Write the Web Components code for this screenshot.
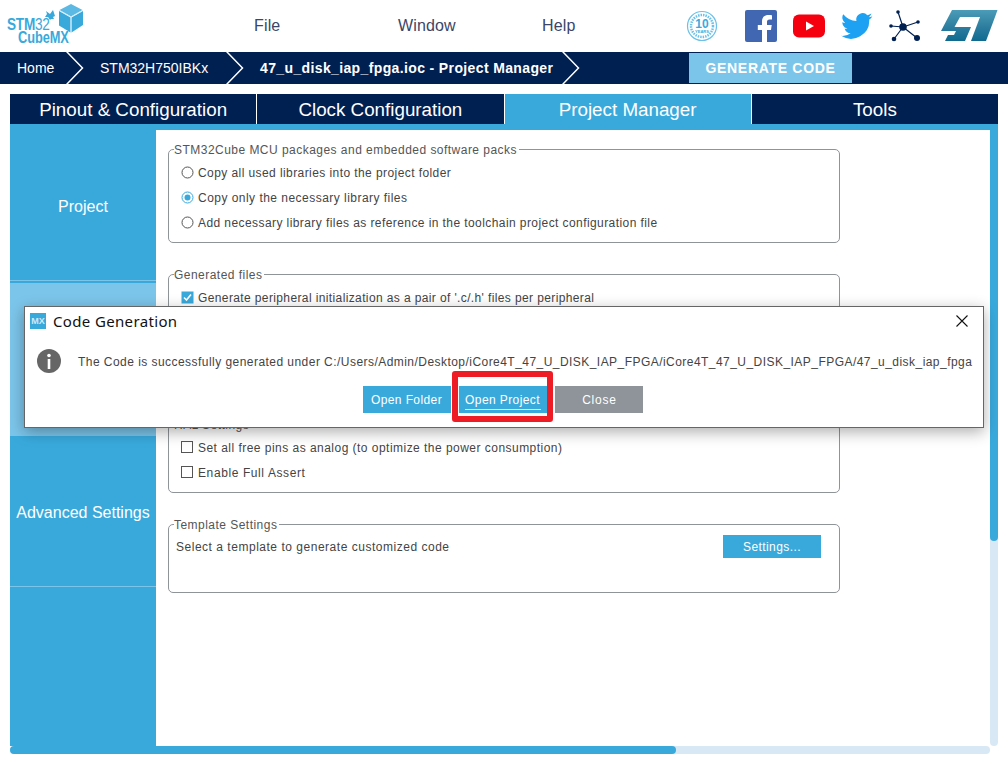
<!DOCTYPE html>
<html>
<head>
<meta charset="utf-8">
<title>STM32CubeMX</title>
<style>
    html, body { margin: 0; height: 100%; background: #fff; overflow: hidden; }
    body { font-family: "Liberation Sans", Arial, sans-serif; position: relative; }
</style>
</head>
<body>
<app-header></app-header>
<app-crumbs></app-crumbs>
<app-tabs></app-tabs>
<app-workspace>
    <side-nav slot="side"></side-nav>
    <group-box label="STM32Cube MCU packages and embedded software packs" h="94">
        <check-row kind="radio">Copy all used libraries into the project folder</check-row>
        <check-row kind="radio" checked style="letter-spacing:.47px">Copy only the necessary library files</check-row>
        <check-row kind="radio">Add necessary library files as reference in the toolchain project configuration file</check-row>
    </group-box>
    <group-box label="Generated files" h="119">
        <check-row kind="box" checked style="letter-spacing:.38px">Generate peripheral initialization as a pair of '.c/.h' files per peripheral</check-row>
    </group-box>
    <group-box label="HAL Settings" h="69">
        <check-row kind="box" style="letter-spacing:.47px">Set all free pins as analog (to optimize the power consumption)</check-row>
        <check-row kind="box" style="letter-spacing:.6px">Enable Full Assert</check-row>
    </group-box>
    <group-box label="Template Settings" h="69">
        <template-row></template-row>
    </group-box>
</app-workspace>
<code-dialog></code-dialog>

<script>
// small helper, every element just stamps its html into an open shadow root
class Base extends HTMLElement {
    constructor() {
        super();
        this.shadow = this.attachShadow({mode: 'open'});
    }
    connectedCallback() {
        this.shadow.innerHTML = this.render();
    }
}

class AppHeader extends Base {
    render() {
        return `
        <style>
            :host { display: flex; height: 52px; align-items: stretch; background: #fff; }
            .logo { width: 254px; position: relative; flex: none; }
            .logo svg { display: block; }
            .menu { display: flex; width: 432px; align-items: center; flex: none; color: #3a4668; font-size: 16px; box-sizing: border-box; }
            .menu span { width: 144px; letter-spacing: .15px; }
            .icons { display: flex; align-items: center; flex: none; }
            .icons svg { display: block; flex: none; }
            .stm { position: absolute; left: 7px; top: 18px; font: bold 17px/13px "Liberation Sans", Arial, sans-serif; color: #39a9dc; transform: scaleX(.8); transform-origin: 0 0; letter-spacing: -.3px; }
            .stm i { font-style: normal; font-weight: normal; }
            .cube { position: absolute; left: 18px; top: 32px; font: bold 16px/12px "Liberation Sans", Arial, sans-serif; color: #39a9dc; transform: scaleX(.8); transform-origin: 0 0; letter-spacing: -.1px; }
        </style>
        <div class="logo">
            <span class="stm">STM<i>32</i></span>
            <span class="cube">CubeMX</span>
            <svg width="90" height="50" viewBox="0 0 90 50">
                <path d="M46 11l4 3 3-4 2 6-2 1 1 2-3 0-1 1-2-3-3 0 2-3z" fill="#39a9dc"/>
                <path d="M71 4l11.500 6-11.500 6.500-11.500-6.500z" fill="#5bb9e4"/>
                <path d="M59 11l11.500 6.500v15l-11.500-7z" fill="#39a9dc"/>
                <path d="M71.500 17.500l11.500-6.500v14l-11.500 7.500z" fill="#39a9dc"/>
                <path d="M71 16.800v15.500M71 16.800L59.500 10.500M71 16.800L82.500 10.500" stroke="#bfe4f6" stroke-width=".7" fill="none"/>
            </svg>
        </div>
        <div class="menu"><span>File</span><span>Window</span><span>Help</span></div>
        <div class="icons">
            <svg width="32" height="32" viewBox="0 0 32 32" style="margin-right:27px">
                <circle cx="16" cy="16" r="14.500" fill="none" stroke="#6cc1e8" stroke-width="1.200"/>
                <circle cx="16" cy="16" r="11" fill="none" stroke="#6cc1e8" stroke-width="2.500" stroke-dasharray="1.500 1"/>
                <text x="16" y="18" text-anchor="middle" font-family="Liberation Sans" font-weight="bold" font-size="12" fill="#39a9dc">10</text>
                <text x="16" y="23" text-anchor="middle" font-family="Liberation Sans" font-weight="bold" font-size="4" fill="#39a9dc">YEARS</text>
            </svg>
            <svg width="32" height="32" viewBox="0 0 32 32" style="margin-right:16px">
                <rect width="32" height="32" rx="2" fill="#4267b2"/>
                <path d="M22 32V20h4l.7-5H22v-3c0-1.500.6-2.500 2.600-2.500H27V5.200C26.500 5.100 25 5 23.300 5 19.600 5 17 7.200 17 11.300V15h-4.200v5H17v12z" fill="#fff"/>
            </svg>
            <svg width="32" height="32" viewBox="0 0 32 32" style="margin-right:16px">
                <rect x="0" y="4.500" width="32" height="23" rx="6" fill="#f5000f"/>
                <path d="M13 11.500l8 4.500-8 4.500z" fill="#fff"/>
            </svg>
            <svg width="32" height="32" viewBox="0 0 24 24" style="margin-right:16px">
                <path d="M23.500 4.600c-.9.400-1.800.7-2.800.8 1-.6 1.800-1.600 2.100-2.700-.9.600-2 1-3 1.200A4.800 4.800 0 0 0 11.600 8.300 13.700 13.700 0 0 1 1.700 3.200a4.800 4.800 0 0 0 1.500 6.500c-.8 0-1.500-.2-2.200-.6 0 2.300 1.600 4.300 3.900 4.800-.7.200-1.500.2-2.200.1.600 1.900 2.400 3.300 4.500 3.400A9.700 9.700 0 0 1 .1 19.400 13.700 13.700 0 0 0 21.200 7.200c1-.7 1.700-1.600 2.300-2.600z" fill="#1da1f2"/>
            </svg>
            <svg width="32" height="32" viewBox="0 0 32 32" style="margin-right:19px">
                <g stroke="#002052" stroke-width="1.200">
                    <path d="M14 17L9 2M14 17L29 12M14 17L28 28M14 17L5 29M14 17L2 16"/>
                </g>
                <g fill="#002052">
                    <circle cx="14" cy="17" r="3.800"/><circle cx="9" cy="2" r="1.800"/><circle cx="29" cy="12" r="1.800"/>
                    <circle cx="28" cy="28" r="3"/><circle cx="5" cy="29" r="2.300"/><circle cx="2" cy="16" r="1.800"/>
                </g>
            </svg>
            <svg width="58" height="32" viewBox="0 0 58 32">
                <defs><linearGradient id="st" x1="0" y1="0" x2="0" y2="1">
                    <stop offset="0" stop-color="#4b9cb8"/><stop offset=".55" stop-color="#2d7d9f"/><stop offset="1" stop-color="#0f6a90"/>
                </linearGradient></defs>
                <path d="M12 0H57.500L55 7 46 31H31L40 7H20L14.500 17H31L25 31H5L8 25H14L16 21H1Z" fill="url(#st)"/>
            </svg>
        </div>`;
    }
}

class AppCrumbs extends Base {
    render() {
        return `
        <style>
            :host { display: flex; height: 32px; background: #002052; color: #fff; font-size: 14px; align-items: center; }
            .c { flex: none; white-space: nowrap; }
            svg { display: block; flex: none; }
            .bold { font-weight: bold; letter-spacing: .37px; }
            .gen { margin-left: 109px; flex: none; width: 163px; height: 30px; background: #7cc5ea; color: #fff; font-weight: bold; display: flex; align-items: center; justify-content: center; letter-spacing: .7px; }
        </style>
        <span class="c" style="margin-left:17px;width:49px">Home</span>
        <svg width="18" height="32"><path d="M0 -1L16.500 16 0 33" fill="none" stroke="#fff" stroke-width="1.500"/></svg>
        <span class="c" style="margin-left:16px;width:126px">STM32H750IBKx</span>
        <svg width="18" height="32"><path d="M0 -1L16.500 16 0 33" fill="none" stroke="#fff" stroke-width="1.500"/></svg>
        <span class="c bold" style="margin-left:16px;width:302px">47_u_disk_iap_fpga.ioc - Project Manager</span>
        <svg width="18" height="32"><path d="M0 -1L16.500 16 0 33" fill="none" stroke="#fff" stroke-width="1.500"/></svg>
        <span class="gen">GENERATE CODE</span>`;
    }
}

class AppTabs extends Base {
    render() {
        return `
        <style>
            :host { display: flex; height: 30px; margin: 10px 10px 0; background: #002052; color: #fff; font-size: 18.8px; }
            div { flex: 1; display: flex; align-items: center; justify-content: center; box-sizing: border-box; border-right: 1px solid #fff; padding-top: 1px; }
            div:last-child { border-right: 0; }
            .on { background: #39a9dc; }
        </style>
        <div>Pinout &amp; Configuration</div>
        <div>Clock Configuration</div>
        <div class="on">Project Manager</div>
        <div>Tools</div>`;
    }
}

class AppWorkspace extends Base {
    render() {
        return `
        <style>
            :host { display: grid; grid-template-columns: 146px 1fr 8px; grid-template-rows: 6px 616px 8px; margin: 0 10px; width: 988px; }
            .strip { grid-column: 1 / 4; background: #39a9dc; }
            .main { padding: 19px 0 0 12px; display: flex; flex-direction: column; gap: 31px; overflow: hidden; align-items: flex-start; }
            .vbar { background: #d9e8f5; border-radius: 0 0 4px 4px; position: relative; }
            .vbar i { display: block; height: 411px; background: #39a9dc; border-radius: 0 0 4px 4px; }
            .hbar { grid-column: 1 / 3; background: #d9e8f5; border-radius: 4px; }
            .hbar i { display: block; width: 666px; height: 8px; background: #39a9dc; border-radius: 4px; }
        </style>
        <div class="strip"></div>
        <slot name="side"></slot>
        <div class="main"><slot></slot></div>
        <div class="vbar"><i></i></div>
        <div class="hbar"><i></i></div>`;
    }
}

class SideNav extends Base {
    render() {
        return `
        <style>
            :host { display: flex; flex-direction: column; background: #39a9dc; color: #fff; font-size: 16px; height: 616px; }
            div { display: flex; align-items: center; justify-content: center; flex: none; box-sizing: border-box; }
            .a { height: 151px; border-bottom: 1px solid #7cc5ea; padding-top: 3px; }
            .b { height: 153px; margin-top: 2px; background: #7cc5ea; }
            .c { height: 151px; border-bottom: 1px solid #7cc5ea; padding-top: 4px; }
        </style>
        <div class="a">Project</div>
        <div class="b"></div>
        <div class="c">Advanced Settings</div>`;
    }
}

class GroupBox extends Base {
    render() {
        return `
        <style>
            :host { display: block; width: 672px; height: ${this.getAttribute('h')}px; box-sizing: border-box; border: 1px solid #8f9499; border-radius: 5px; padding: 0 0 0 12px; flex: none; }
            .legend { display: block; width: fit-content; margin: -8px 0 2px -7px; padding-right: 2px; background: #fff; color: #555; font-size: 12px; line-height: 16px; letter-spacing: .47px; }
        </style>
        <span class="legend">${this.getAttribute('label')}</span>
        <slot></slot>`;
    }
}

class CheckRow extends Base {
    render() {
        const on = this.hasAttribute('checked');
        const mark = this.getAttribute('kind') === 'radio'
            ? `<svg width="13" height="13"><circle cx="6.500" cy="6.500" r="5.500" fill="#fff" stroke="${on ? '#39a9dc' : '#555'}"/>${on ? '<circle cx="6.500" cy="6.500" r="3" fill="#39a9dc"/>' : ''}</svg>`
            : on
                ? `<svg width="13" height="13"><rect x=".5" y=".5" width="12" height="12" fill="#39a9dc"/><path d="M3 6.500l2.500 2.500 4.500-5.500" fill="none" stroke="#fff" stroke-width="1.600"/></svg>`
                : `<svg width="13" height="13"><rect x=".5" y=".5" width="11" height="11" fill="#fff" stroke="#555"/></svg>`;
        return `
        <style>
            :host { display: flex; height: 25px; align-items: center; gap: 4px; color: #444; font-size: 12px; letter-spacing: .42px; white-space: nowrap; }
            svg { display: block; flex: none; }
        </style>
        ${mark}<slot></slot>`;
    }
}

class TemplateRow extends Base {
    render() {
        return `
        <style>
            :host { display: flex; align-items: flex-start; justify-content: space-between; width: 645px; margin: 1px 0 0 -5px; color: #444; font-size: 12px; letter-spacing: .52px; white-space: nowrap; }
            span { line-height: 25px; }
            b { font-weight: normal; width: 98px; height: 23px; background: #39a9dc; color: #fff; display: flex; align-items: center; justify-content: center; letter-spacing: .4px; }
        </style>
        <span>Select a template to generate customized code</span><b>Settings...</b>`;
    }
}

class CodeDialog extends Base {
    render() {
        return `
        <style>
            :host { display: block; position: absolute; left: 24px; top: 306px; width: 960px; height: 122px; box-sizing: border-box; background: #fff; border: 1px solid #666; box-shadow: 0 4px 14px rgba(0,0,0,.32); }
            .title { display: flex; align-items: center; height: 28px; padding: 0 15px 0 5px; margin-bottom: 11px; }
            .mx { width: 16px; height: 16px; background: #39a9dc; color: #cfeafa; font: bold 9px/16px "Liberation Sans", Arial, sans-serif; text-align: center; flex: none; }
            .name { margin-left: 7px; font: 15px "Noto Sans", "Open Sans", sans-serif; color: #111; flex: 1; letter-spacing: .35px; }
            .title svg { display: block; }
            .msg { display: flex; align-items: center; padding-left: 12px; gap: 17px; height: 30px; color: #444; font-size: 12px; letter-spacing: .455px; white-space: nowrap; }
            .msg svg { display: block; flex: none; }
            .msg span { padding-top: 2px; }
            .btns { display: flex; justify-content: center; gap: 8px; margin-top: 10px; padding-right: 3px; }
            .btn { width: 88px; height: 27px; background: #39a9dc; color: #fff; font-size: 12px; letter-spacing: .4px; display: flex; align-items: center; justify-content: center; position: relative; }
            .grey { background: #8e9499; letter-spacing: .8px; padding-left: 2px; box-sizing: border-box; }
            .focus::after { content: ""; position: absolute; left: 6px; right: 6px; bottom: 3px; border-bottom: 1px solid #cfeafa; }
            .red { position: absolute; left: 427px; top: 64px; width: 101px; height: 51px; box-sizing: border-box; border: 6px solid #ee1c25; border-radius: 3px; }
        </style>
        <div class="title">
            <span class="mx">MX</span>
            <span class="name">Code Generation</span>
            <svg width="12" height="12"><path d="M.5 .5L11.500 11.500M11.500 .5L.5 11.500" stroke="#111" stroke-width="1.100"/></svg>
        </div>
        <div class="msg">
            <svg width="24" height="24" viewBox="0 0 24 24">
                <circle cx="12" cy="12" r="12" fill="#666"/>
                <circle cx="12" cy="6.500" r="1.800" fill="#fff"/>
                <rect x="10.700" y="10" width="2.600" height="10" fill="#fff"/>
            </svg>
            <span>The Code is successfully generated under C:/Users/Admin/Desktop/iCore4T_47_U_DISK_IAP_FPGA/iCore4T_47_U_DISK_IAP_FPGA/47_u_disk_iap_fpga</span>
        </div>
        <div class="btns">
            <span class="btn">Open Folder</span>
            <span class="btn focus">Open Project</span>
            <span class="btn grey">Close</span>
        </div>
        <div class="red"></div>`;
    }
}

window.customElements.define('app-header', AppHeader);
window.customElements.define('app-crumbs', AppCrumbs);
window.customElements.define('app-tabs', AppTabs);
window.customElements.define('app-workspace', AppWorkspace);
window.customElements.define('side-nav', SideNav);
window.customElements.define('group-box', GroupBox);
window.customElements.define('check-row', CheckRow);
window.customElements.define('template-row', TemplateRow);
window.customElements.define('code-dialog', CodeDialog);
</script>
</body>
</html>
